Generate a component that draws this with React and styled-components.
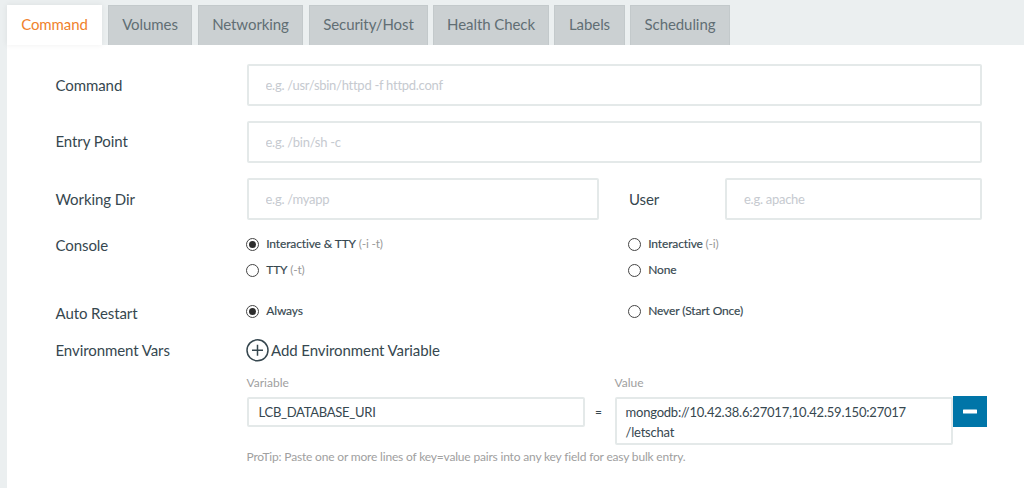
import React from "react";
import styled, { createGlobalStyle } from "styled-components";

const GlobalStyle = createGlobalStyle`
  * { box-sizing: border-box; }
  body {
    margin: 0;
    background: #ebeff0;
    font-family: Lato, "Open Sans", sans-serif;
    color: #36474f;
  }
`;

const Page = styled.div`
  height: 488px;
  padding: 5px 0 0 7px;
  overflow: hidden;
`;

const TabBar = styled.nav`
  display: flex;
  height: 40px;
`;

const Tab = styled.button`
  display: flex;
  justify-content: center;
  width: ${(p) => p.$width}px;
  margin-right: ${(p) => p.$gap || 6}px;
  padding: ${(p) => (p.$active ? "1px 0 0" : "0")};
  border: ${(p) => (p.$active ? "0" : "1px solid #c3c9cb")};
  border-bottom: 0;
  background: ${(p) => (p.$active ? "#fff" : "#cbd0d2")};
  color: ${(p) => (p.$active ? "#f0812c" : "#616e74")};
  box-shadow: ${(p) => (p.$active ? "0 0 6px rgba(0, 0, 0, 0.07)" : "none")};
  font: 15px/37px Lato, sans-serif;
  letter-spacing: -0.08px;
  white-space: nowrap;
`;

const Panel = styled.main`
  height: 443px;
  padding: 19px 42px 0 48.5px;
  background: #fff;
`;

const Row = styled.section`
  display: flex;
  align-items: flex-start;
  height: ${(p) => p.$height}px;
`;

const Label = styled.label`
  flex: none;
  width: 191px;
  padding-top: ${(p) => p.$top}px;
  font-size: 15px;
  line-height: 20px;
  letter-spacing: -0.08px;
`;

const SideLabel = styled(Label)`
  width: 126px;
  padding-left: 30px;
`;

const Field = styled.input`
  flex: ${(p) => (p.$width ? "none" : "1")};
  width: ${(p) => p.$width || 100}px;
  min-width: 0;
  height: 42px;
  padding: 0 17px;
  border: 2px solid #e4e9e9;
  border-radius: 2px;
  outline: 0;
  background: #fff;
  color: #36474f;
  font: 13px Lato, sans-serif;
  letter-spacing: -0.27px;
  &::placeholder { color: #c6cad0; opacity: 1; }
`;

const Options = styled.div`
  display: grid;
  grid-template-columns: 382px 1fr;
  grid-auto-rows: 26px;
  flex: 1;
  margin-left: -0.8px;
`;

const Option = styled.label`
  display: flex;
  align-items: center;
  gap: 7.5px;
  height: 18px;
  font-size: 12px;
  line-height: 18px;
  letter-spacing: -0.13px;
  -webkit-text-stroke: 0.15px;
  white-space: pre;
`;

const Mark = styled.span`
  flex: none;
  display: grid;
  place-items: center;
  width: 13px;
  height: 13px;
  border: 1px solid #444;
  border-radius: 50%;
  &::after {
    content: "";
    width: 7px;
    height: 7px;
    border-radius: 50%;
    background: ${(p) => (p.$checked ? "#2c2c2c" : "transparent")};
  }
`;

const Muted = styled.span`
  color: #9a9a9a;
  letter-spacing: -0.25px;
  -webkit-text-stroke: 0;
`;

const AddButton = styled.button`
  display: flex;
  align-items: center;
  gap: 2px;
  height: 24px;
  margin-left: -0.5px;
  padding: 0;
  border: 0;
  background: none;
  color: #36474f;
  font: 15px/24px Lato, sans-serif;
  letter-spacing: -0.08px;
  white-space: nowrap;
`;

const Variables = styled.div`
  display: grid;
  grid-template-columns: 338px 30px 338px 34px;
  align-items: start;
  padding-left: 191px;
`;

const Caption = styled.span`
  height: 22px;
  color: #a0a0a0;
  font-size: 12px;
  line-height: 16px;
  white-space: nowrap;
`;

const KeyField = styled(Field)`
  width: 338px;
  height: 30px;
  padding: 0 10px;
`;

const Equals = styled.span`
  padding-right: 2px;
  font-size: 12px;
  line-height: 29px;
  text-align: center;
`;

const ValueField = styled.div`
  height: 48px;
  padding: 3px 9px;
  border: 2px solid #e4e9e9;
  border-radius: 2px;
  font-size: 13px;
  line-height: 20px;
  letter-spacing: -0.21px;
`;

const RemoveButton = styled.button`
  display: grid;
  place-items: center;
  width: 34px;
  height: 31px;
  margin-top: -1px;
  padding: 0;
  border: 0;
  background: #0075a8;
`;

const Tip = styled.p`
  margin: 3px 0 0 191px;
  color: #a0a0a0;
  font-size: 12px;
  line-height: 18px;
  letter-spacing: -0.18px;
`;

const tabs = [
  { name: "Command", width: 95, active: true },
  { name: "Volumes", width: 84 },
  { name: "Networking", width: 105 },
  { name: "Security/Host", width: 119, gap: 5 },
  { name: "Health Check", width: 116, gap: 5 },
  { name: "Labels", width: 71, gap: 5 },
  { name: "Scheduling", width: 100 },
];

function Radio({ checked, note, children }) {
  return (
    <Option>
      <Mark $checked={checked} />
      <span>{children}{note && <Muted> ({note})</Muted>}</span>
    </Option>
  );
}

export default function App() {
  return (
    <Page>
      <GlobalStyle />
      <TabBar>
        {tabs.map((t) => (
          <Tab key={t.name} $width={t.width} $gap={t.gap} $active={t.active}>{t.name}</Tab>
        ))}
      </TabBar>
      <Panel>
        <Row $height={57}>
          <Label $top={11}>Command</Label>
          <Field placeholder="e.g. /usr/sbin/httpd -f httpd.conf" />
        </Row>
        <Row $height={57}>
          <Label $top={10}>Entry Point</Label>
          <Field placeholder="e.g. /bin/sh -c" />
        </Row>
        <Row $height={57}>
          <Label $top={11}>Working Dir</Label>
          <Field $width={352.5} placeholder="e.g. /myapp" />
          <SideLabel $top={11}>User</SideLabel>
          <Field placeholder="e.g. apache" />
        </Row>
        <Row $height={67}>
          <Label $top={0}>Console</Label>
          <Options>
            <Radio checked note="-i -t">Interactive &amp; TTY</Radio>
            <Radio note="-i">Interactive</Radio>
            <Radio note="-t">TTY</Radio>
            <Radio>None</Radio>
          </Options>
        </Row>
        <Row $height={36}>
          <Label $top={1}>Auto Restart</Label>
          <Options>
            <Radio checked>Always</Radio>
            <Radio>Never (Start Once)</Radio>
          </Options>
        </Row>
        <Row $height={37}>
          <Label $top={2}>Environment Vars</Label>
          <AddButton>
            <svg width="23" height="24" viewBox="0 0 23 24" fill="none" stroke="#36474f" strokeWidth="1.5">
              <circle cx="11.5" cy="12.3" r="10.5" />
              <path d="M6 12.3h11M11.5 6.8v11" />
            </svg>
            Add Environment Variable
          </AddButton>
        </Row>
        <Variables>
          <Caption>Variable</Caption>
          <span />
          <Caption>Value</Caption>
          <span />
          <KeyField defaultValue="LCB_DATABASE_URI" />
          <Equals>=</Equals>
          <ValueField>mongodb://10.42.38.6:27017,10.42.59.150:27017<br />/letschat</ValueField>
          <RemoveButton aria-label="Remove">
            <svg width="14" height="5" viewBox="0 0 14 5"><rect width="14" height="4" y="0.5" rx="0.5" fill="#fff" /></svg>
          </RemoveButton>
        </Variables>
        <Tip>ProTip: Paste one or more lines of key=value pairs into any key field for easy bulk entry.</Tip>
      </Panel>
    </Page>
  );
}
